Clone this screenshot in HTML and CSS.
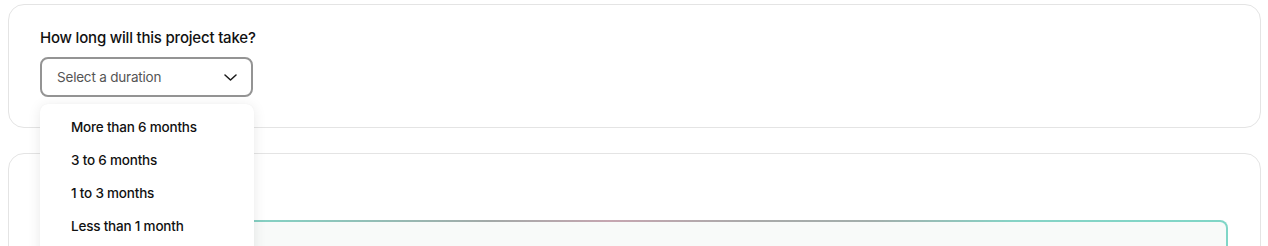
FILE: index.html
```html
<!DOCTYPE html>
<html lang="en">
<head>
<meta charset="utf-8">
<title>Project duration</title>
<link rel="stylesheet" href="styles.css">
</head>
<body>
<div class="page">
  <section class="card card-top">
    <label class="label" for="duration">How long will this project take?</label>
    <div class="select-wrap">
      <button class="select" id="duration" type="button">
        <span class="placeholder">Select a duration</span>
        <svg class="chevron" width="13" height="7" viewBox="0 0 13 7" aria-hidden="true"><path d="M1 1l5.5 5 5.5-5" fill="none" stroke="#1a1a1a" stroke-width="1.5" stroke-linecap="round" stroke-linejoin="round"/></svg>
      </button>
      <ul class="menu">
        <li class="option">More than 6 months</li>
        <li class="option">3 to 6 months</li>
        <li class="option">1 to 3 months</li>
        <li class="option">Less than 1 month</li>
      </ul>
    </div>
  </section>
  <section class="card card-bottom">
    <div class="inner-box"></div>
  </section>
</div>
</body>
</html>
```
FILE: styles.css
```css
* { box-sizing: border-box; }
html, body { margin: 0; padding: 0; background: #ffffff; overflow: hidden; }
body { font-family: Inter, "Noto Sans", sans-serif; color: #141414; }
.page {
  padding: 4px 7px 0 8px;
  display: flex;
  flex-direction: column;
  gap: 25px;
}
.card {
  border: 1px solid #e4e4e4;
  border-radius: 16px;
  background: #fff;
}
.card-top {
  height: 124px;
  padding: 23px 31px 0 31px;
  position: relative;
  z-index: 2;
}
.label {
  display: block;
  font-size: 15px;
  line-height: 20px;
  letter-spacing: -0.2px;
  color: #111;
  font-weight: 450;
}
.select-wrap {
  position: relative;
  margin-top: 9px;
  width: 214px;
}
.select {
  width: 213px;
  height: 40px;
  border: 2px solid #949494;
  border-radius: 8px;
  background: #fff;
  display: flex;
  align-items: center;
  justify-content: space-between;
  padding: 0 14px 1px 15px;
  font-family: inherit;
  cursor: pointer;
}
.placeholder {
  font-size: 13.5px;
  letter-spacing: -0.2px;
  color: #555;
}
.chevron { display: block; margin-top: 1px; }
.menu {
  position: absolute;
  top: 47px;
  left: 0;
  width: 214px;
  margin: 0;
  padding: 7px 0 0;
  list-style: none;
  background: #fff;
  border-radius: 8px;
  box-shadow: 0 2px 14px rgba(0, 0, 0, 0.09), 0 0 1px rgba(0, 0, 0, 0.06);
  height: 160px;
}
.option {
  height: 33px;
  line-height: 33px;
  padding-left: 31px;
  font-size: 13.5px;
  letter-spacing: -0.2px;
  color: #111;
  font-weight: 450;
}
.card-bottom {
  height: 200px;
  padding: 66px 32px 0 31px;
}
.inner-box {
  height: 120px;
  border: 2px solid transparent;
  border-radius: 8px;
  background:
    linear-gradient(#f8faf9, #f8faf9) padding-box,
    linear-gradient(90deg, #7fd5c6 0%, #86cfc2 20%, #a3a9a8 38%, #c6a6b1 48%, #a9aaaa 60%, #a3aeac 70%, #86d3c6 82%, #80d6c7 100%) border-box;
}
```
